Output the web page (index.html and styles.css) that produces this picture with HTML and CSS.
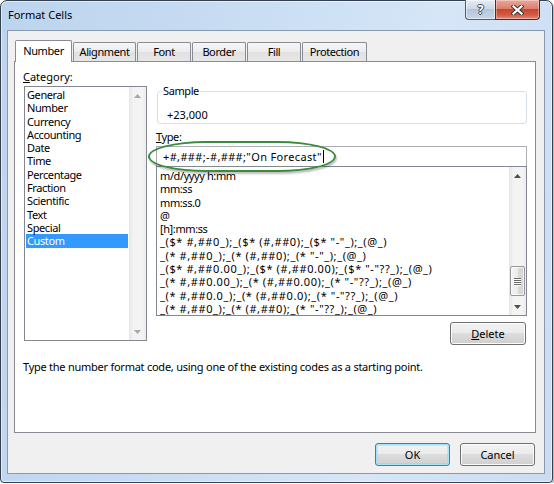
FILE: index.html
```html
<!DOCTYPE html>
<html>
<head>
<meta charset="utf-8">
<title>Format Cells</title>
<link rel="stylesheet" href="styles.css">
</head>
<body>
<div class="window">
  <div class="titlebar">
    <div class="title">Format Cells</div>
    <div class="caption">
      <div class="cap-help"><span>?</span></div>
      <div class="cap-close">
        <svg width="13" height="10" viewBox="0 0 13 10"><path d="M2.5 1.5 L10.5 8.5 M10.5 1.5 L2.5 8.5" stroke="#3a3a3a" stroke-width="4.2" stroke-linecap="square" fill="none"/><path d="M2.5 1.5 L10.5 8.5 M10.5 1.5 L2.5 8.5" stroke="#ffffff" stroke-width="2.2" stroke-linecap="square" fill="none"/></svg>
      </div>
    </div>
  </div>
  <div class="client">
    <div class="tabs">
      <div class="tab sel w-number">Number</div>
      <div class="tab w-align">Alignment</div>
      <div class="tab w-font">Font</div>
      <div class="tab w-border">Border</div>
      <div class="tab w-fill">Fill</div>
      <div class="tab w-prot">Protection</div>
    </div>
    <div class="panel">
      <div class="cols">
        <div class="leftcol">
          <div class="lbl lbl-cat"><u>C</u>ategory:</div>
          <div class="listbox catlist">
            <div class="items">
              <div class="item">General</div>
              <div class="item">Number</div>
              <div class="item">Currency</div>
              <div class="item">Accounting</div>
              <div class="item">Date</div>
              <div class="item">Time</div>
              <div class="item">Percentage</div>
              <div class="item">Fraction</div>
              <div class="item">Scientific</div>
              <div class="item">Text</div>
              <div class="item">Special</div>
              <div class="item sel">Custom</div>
            </div>
            <div class="vscroll disabled">
              <div class="sb-btn"><svg width="7" height="4" viewBox="0 0 7 4"><path d="M0 4 L3.5 0 L7 4 Z"/></svg></div>
              <div class="sb-track"></div>
              <div class="sb-btn"><svg width="7" height="4" viewBox="0 0 7 4"><path d="M0 0 L3.5 4 L7 0 Z"/></svg></div>
            </div>
          </div>
        </div>
        <div class="rightcol">
          <fieldset class="sample">
            <legend>Sample</legend>
            <div class="sample-val">+23,000</div>
          </fieldset>
          <div class="lbl lbl-type"><u>T</u>ype:</div>
          <div class="combo">
            <div class="type-input"><span>+#,###;-#,###;"On Forecast"</span><span class="caret"></span></div>
            <div class="listbox fmtlist">
              <div class="items">
                <div class="item">m/d/yyyy h:mm</div>
                <div class="item">mm:ss</div>
                <div class="item">mm:ss.0</div>
                <div class="item">@</div>
                <div class="item">[h]:mm:ss</div>
                <div class="item sym">_($* #,##0_);_($* (#,##0);_($* "-"_);_(@_)</div>
                <div class="item sym">_(* #,##0_);_(* (#,##0);_(* "-"_);_(@_)</div>
                <div class="item sym">_($* #,##0.00_);_($* (#,##0.00);_($* "-"??_);_(@_)</div>
                <div class="item sym">_(* #,##0.00_);_(* (#,##0.00);_(* "-"??_);_(@_)</div>
                <div class="item sym">_(* #,##0.0_);_(* (#,##0.0);_(* "-"??_);_(@_)</div>
                <div class="item sym">_(* #,##0_);_(* (#,##0);_(* "-"??_);_(@_)</div>
              </div>
              <div class="vscroll">
                <div class="sb-btn"><svg width="7" height="4" viewBox="0 0 7 4"><path d="M0 4 L3.5 0 L7 4 Z"/></svg></div>
                <div class="sb-track">
                  <div class="thumb"><i></i><i></i><i></i><i></i></div>
                </div>
                <div class="sb-btn"><svg width="7" height="4" viewBox="0 0 7 4"><path d="M0 0 L3.5 4 L7 0 Z"/></svg></div>
              </div>
            </div>
            <div class="ring"></div>
          </div>
          <div class="delete-row"><button class="btn btn-delete"><u>D</u>elete</button></div>
        </div>
      </div>
      <div class="desc">Type the number format code, using one of the existing codes as a starting point.</div>
    </div>
    <div class="dlg-btns">
      <button class="btn btn-ok default">OK</button>
      <button class="btn btn-cancel">Cancel</button>
    </div>
  </div>
</div>
</body>
</html>
```
FILE: styles.css
```css
* { box-sizing: border-box; }
html, body { margin: 0; padding: 0; background: #ffffff; }
body {
  font-family: "Noto Sans", "Open Sans", sans-serif;
  font-size: 11px;
  line-height: 13px;
  letter-spacing: -0.4px;
  color: #000;
}

.window {
  width: 553px;
  height: 483px;
  border: 1px solid #34404f;
  border-radius: 7px 7px 4px 4px;
  background: linear-gradient(100deg, #bcd4ee 0%, #c9ddf3 40%, #d6e6f7 70%, #c9dcf2 100%);
  box-shadow: inset 0 0 0 1px rgba(255,255,255,0.55), 1px 1px 2px rgba(0,0,0,0.35);
  padding: 0 7px 8px 6px;
  display: flex;
  flex-direction: column;
}

.titlebar {
  height: 29px;
  flex-shrink: 0;
  display: flex;
  align-items: flex-start;
}
.title {
  margin-top: 7px;
  padding-left: 1px;
  line-height: 14px;
  letter-spacing: 0;
}
.caption {
  margin-left: auto;
  margin-right: 5px;
  margin-top: -1px;
  height: 20px;
  display: flex;
}
.cap-help {
  width: 30px;
  height: 20px;
  border: 1px solid #4d5d72;
  border-top: 0;
  border-right: 0;
  border-radius: 0 0 0 4px;
  background: linear-gradient(#e4ecf5 0%, #cdd9e6 45%, #b4c6da 50%, #c7d6e6 100%);
  box-shadow: inset 0 0 0 1px rgba(255,255,255,0.5);
  display: flex;
  align-items: center;
  justify-content: center;
}
.cap-help span {
  color: #fff;
  font-weight: bold;
  font-size: 12px;
  line-height: 12px;
  letter-spacing: 0;
  text-shadow: 1px 0 #3b4a5e, -1px 0 #3b4a5e, 0 1px #3b4a5e, 0 -1px #3b4a5e;
}
.cap-close {
  width: 45px;
  height: 20px;
  border: 1px solid #4a2a2a;
  border-top: 0;
  border-radius: 0 0 4px 0;
  background: linear-gradient(#eaa89b 0%, #dc7f6c 45%, #c7452f 50%, #d25c45 80%, #e48b78 100%);
  box-shadow: inset 0 0 0 1px rgba(255,255,255,0.35);
  display: flex;
  align-items: center;
  justify-content: center;
}

.client {
  flex: 1;
  background: #f0f0f0;
  border: 1px solid #8799ae;
  padding: 9px 8px 7px 6px;
  display: flex;
  flex-direction: column;
}

.tabs {
  height: 21px;
  flex-shrink: 0;
  display: flex;
  align-items: flex-end;
  padding-left: 1px;
}
.tab {
  height: 19px;
  border: 1px solid #898c95;
  border-bottom: 0;
  border-radius: 2px 2px 0 0;
  margin-left: 1px;
  background: linear-gradient(#f6f6f6 0%, #ececec 50%, #e1e1e1 51%, #e7e7e7 100%);
  text-align: center;
  line-height: 18px;
}
.tab.sel {
  height: 22px;
  margin-left: 0;
  margin-bottom: -1px;
  background: #ffffff;
  position: relative;
  z-index: 1;
  line-height: 20px;
}
.w-number { width: 57px; }
.w-align { width: 63px; }
.w-font { width: 54px; }
.w-border { width: 54px; }
.w-fill { width: 54px; }
.w-prot { width: 65px; }

.panel {
  height: 372px;
  flex-shrink: 0;
  border: 1px solid #898c95;
  background: #ffffff;
  padding: 8px 8px 0 9px;
}
.cols {
  display: grid;
  grid-template-columns: 123px 371px;
  column-gap: 9px;
  align-items: start;
}

.lbl { height: 13px; line-height: 13px; }
.lbl-cat { margin-left: -1px; letter-spacing: 0; }
.lbl u, .btn u { text-decoration: underline; text-underline-offset: 1px; }

.listbox {
  border: 1px solid #828790;
  background: #ffffff;
  display: flex;
}
.items {
  flex: 1;
  min-width: 0;
  overflow: hidden;
}
.item {
  height: 13.3px;
  line-height: 13.3px;
  padding-left: 2px;
  white-space: pre;
}
.item.sym { letter-spacing: 0.6px; }
.catlist {
  margin-top: 3px;
  height: 255px;
}
.catlist .items { padding-top: 1px; }
.catlist .item.sel {
  background: #3399ff;
  color: #ffffff;
  margin: 0 1px;
  padding-left: 1px;
}

.vscroll {
  width: 17px;
  flex-shrink: 0;
  display: flex;
  flex-direction: column;
  background: linear-gradient(to right, #e6e6e6 0%, #f3f3f3 25%, #f4f4f4 75%, #ececec 100%);
}
.sb-btn {
  height: 17px;
  flex-shrink: 0;
  display: flex;
  align-items: center;
  justify-content: center;
}
.sb-btn svg { fill: #4e4e4e; }
.vscroll.disabled .sb-btn svg { fill: #a8a8a8; }
.sb-track {
  flex: 1;
  display: flex;
  flex-direction: column;
  justify-content: flex-end;
  padding-bottom: 2px;
}
.thumb {
  height: 30px;
  margin: 0 1px;
  border: 1px solid #979797;
  border-radius: 2px;
  background: linear-gradient(to right, #f4f4f4 0%, #ececec 50%, #dcdcdc 51%, #d3d3d3 100%);
  box-shadow: inset 0 0 0 1px rgba(255,255,255,0.7);
  display: flex;
  flex-direction: column;
  align-items: center;
  justify-content: center;
  gap: 1px;
}
.thumb i {
  display: block;
  width: 7px;
  height: 1px;
  background: #6a6a6a;
  box-shadow: 0 1px 0 #ffffff;
}

.sample {
  margin: 14px 0 0 1px;
  padding: 0 0 0 4px;
  border: 1px solid #d5dfe5;
  border-radius: 3px;
  height: 40px;
  min-width: 0;
  min-inline-size: 0;
}
.sample legend {
  padding: 0 1px;
  line-height: 14px;
  font-size: 11px;
}
.sample-val {
  margin: 10px 0 0 5px;
  line-height: 13px;
  letter-spacing: 0;
}

.lbl-type { margin-top: 6px; }
.combo {
  margin-top: 3px;
  position: relative;
}
.type-input {
  height: 20px;
  border: 1px solid #abadb3;
  border-bottom: 0;
  padding-left: 6px;
  display: flex;
  align-items: center;
  white-space: pre;
  line-height: 13px;
  letter-spacing: 0.35px;
}
.caret {
  display: inline-block;
  width: 1px;
  height: 13px;
  background: #000;
  margin-left: 1px;
}
.fmtlist { height: 150px; }
.fmtlist .items { padding: 2px 0 0 3px; }
.fmtlist .item { padding-left: 0; }

.ring {
  position: absolute;
  left: -8px;
  top: -5px;
  width: 188px;
  height: 31px;
  border: 2px solid #3a8c3a;
  border-radius: 60px / 16px;
  box-shadow: 1px 2px 2px rgba(0,0,0,0.25);
  pointer-events: none;
}

.delete-row {
  margin-top: 6px;
  display: flex;
  justify-content: flex-end;
  padding-right: 1px;
}

.btn {
  font-family: inherit;
  font-size: 11px;
  letter-spacing: 0;
  color: #000;
  height: 23px;
  padding: 0;
  border: 1px solid #707070;
  border-radius: 3px;
  background: linear-gradient(#f2f2f2 0%, #ebebeb 49%, #dddddd 50%, #cfcfcf 100%);
  box-shadow: inset 0 0 0 1px #fbfbfb;
}
.btn-delete { width: 76px; }
.btn.default {
  border-color: #3c7fb1;
  box-shadow: inset 0 0 0 1px #a6e2fa, inset 0 0 0 2px rgba(120,210,250,0.35);
}

.desc {
  margin-top: 15px;
  margin-left: -1px;
  line-height: 13px;
  letter-spacing: -0.25px;
}

.dlg-btns {
  display: flex;
  justify-content: flex-end;
  gap: 10px;
  padding-top: 10px;
  padding-right: 1px;
}
.btn-ok, .btn-cancel { width: 75px; }
```
